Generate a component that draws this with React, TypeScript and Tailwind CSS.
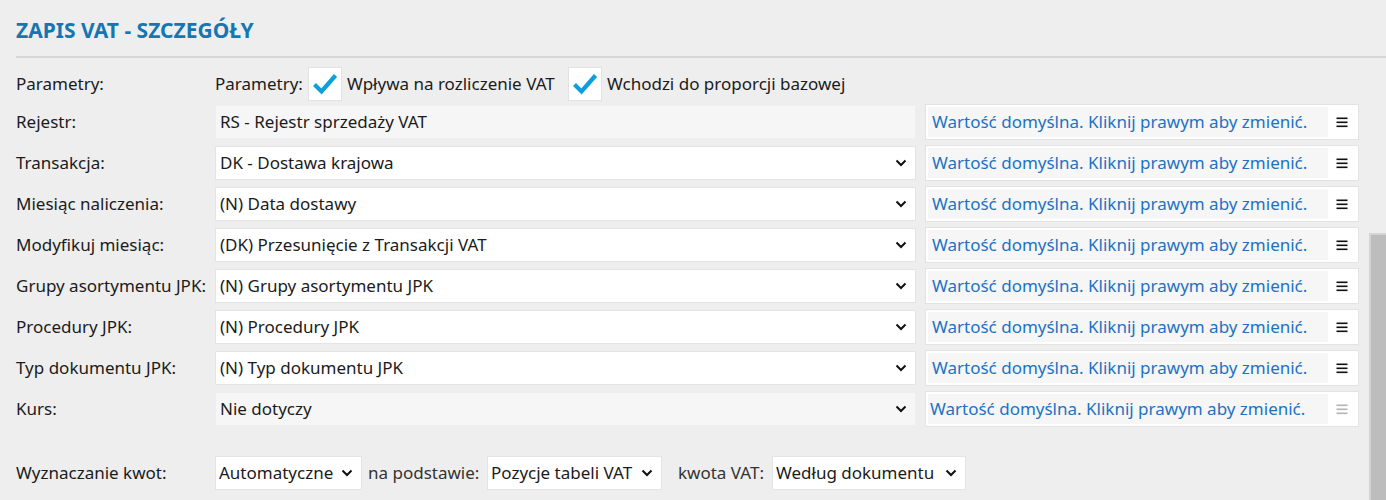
import React from "react";

const rows: { label: string; value: string; kind: "readonly" | "select" | "disabled" }[] = [
  { label: "Rejestr:", value: "RS - Rejestr sprzedaży VAT", kind: "readonly" },
  { label: "Transakcja:", value: "DK - Dostawa krajowa", kind: "select" },
  { label: "Miesiąc naliczenia:", value: "(N) Data dostawy", kind: "select" },
  { label: "Modyfikuj miesiąc:", value: "(DK) Przesunięcie z Transakcji VAT", kind: "select" },
  { label: "Grupy asortymentu JPK:", value: "(N) Grupy asortymentu JPK", kind: "select" },
  { label: "Procedury JPK:", value: "(N) Procedury JPK", kind: "select" },
  { label: "Typ dokumentu JPK:", value: "(N) Typ dokumentu JPK", kind: "select" },
  { label: "Kurs:", value: "Nie dotyczy", kind: "disabled" },
];

function Chevron() {
  return (
    <svg width="12" height="8" viewBox="0 0 12 8" className="shrink-0">
      <path d="M1.5 1.5 L6 6 L10.5 1.5" fill="none" stroke="#111" strokeWidth="2" />
    </svg>
  );
}

function Check() {
  return (
    <div className="w-[34px] h-[34px] shrink-0 bg-white border border-[#e2e2e2] flex items-center justify-center">
      <svg width="26" height="24" viewBox="0 0 26 24">
        <path d="M2.5 12.5 L9.5 19.5 L23.5 3.5" fill="none" stroke="#0c9fdc" strokeWidth="4.2" />
      </svg>
    </div>
  );
}

function Burger({ muted }: { muted?: boolean }) {
  const c = muted ? "#b4b4b4" : "#111";
  return (
    <svg width="12" height="12" viewBox="0 0 12 12">
      <rect x="0.5" y="1.5" width="11" height="1.6" fill={c} />
      <rect x="0.5" y="5.5" width="11" height="1.6" fill={c} />
      <rect x="0.5" y="9.5" width="11" height="1.6" fill={c} />
    </svg>
  );
}

function Dropdown({ value, width }: { value: string; width: string }) {
  return (
    <div className={`${width} h-[34px] shrink-0 bg-white border border-[#e4e4e4] flex items-center justify-between pl-[3px] pr-[8px]`}>
      <span className="whitespace-nowrap">{value}</span>
      <Chevron />
    </div>
  );
}

export default function App() {
  return (
    <div className="relative w-[1386px] h-[500px] overflow-hidden bg-[#eeeeee] text-[17px] text-[#1b1b1b]" style={{ fontFamily: '"Noto Sans", "Open Sans", sans-serif' }}>
      <div className="pl-4">
        <div className="h-[56px] flex items-center pt-[6px]">
          <h1 className="text-[21px] font-bold text-[#1676b2]">ZAPIS VAT - SZCZEGÓŁY</h1>
        </div>
        <div className="h-[2px] bg-[#d6d6d6]" />

        <div className="flex items-center h-[34px] mt-[9px] whitespace-nowrap">
          <div className="w-[199px] shrink-0">Parametry:</div>
          <span className="w-[93px] shrink-0">Parametry:</span>
          <Check />
          <span className="w-[226px] shrink-0 pl-[5px]">Wpływa na rozliczenie VAT</span>
          <Check />
          <span className="pl-[5px]">Wchodzi do proporcji bazowej</span>
        </div>

        <div className="flex flex-col gap-[7px] mt-[4px]">
          {rows.map((r) => (
            <div key={r.label} className="flex items-center h-[34px] whitespace-nowrap">
              <div className="w-[199px] shrink-0">{r.label}</div>
              <div
                className={`w-[701px] shrink-0 h-[34px] flex items-center justify-between pl-[4px] pr-[8px] border ${
                  r.kind === "select" ? "bg-white border-[#e4e4e4]" : "bg-[#f6f6f6] border-[#efefef]"
                }`}
              >
                <span>{r.value}</span>
                {r.kind !== "readonly" && <Chevron />}
              </div>
              <div className="ml-[9px] w-[434px] shrink-0 h-[36px] bg-white border border-[#e3e3e3] flex items-center p-[2px]">
                <div className={`w-[400px] h-full bg-[#f6f6f6] flex items-center text-[#1c72c4] ${r.kind === "disabled" ? "pl-[2px]" : "pl-[4px]"}`}>
                  Wartość domyślna. Kliknij prawym aby zmienić.
                </div>
                <div className="flex-1 flex items-center justify-center">
                  <Burger muted={r.kind === "disabled"} />
                </div>
              </div>
            </div>
          ))}
        </div>

        <div className="flex items-center h-[34px] mt-[30px] whitespace-nowrap">
          <div className="w-[199px] shrink-0">Wyznaczanie kwot:</div>
          <Dropdown value="Automatyczne" width="w-[147px]" />
          <span className="w-[125px] shrink-0 pl-[6px] text-[#333]">na podstawie:</span>
          <Dropdown value="Pozycje tabeli VAT" width="w-[175px]" />
          <span className="w-[110px] shrink-0 pl-[16px] text-[#333]">kwota VAT:</span>
          <Dropdown value="Według dokumentu" width="w-[194px]" />
        </div>
      </div>

      <div className="absolute right-0 top-[233px] bottom-0 w-[17px] bg-[#bdbdbd] border-l-2 border-t-2 border-[#d4d4d4]" />
    </div>
  );
}
